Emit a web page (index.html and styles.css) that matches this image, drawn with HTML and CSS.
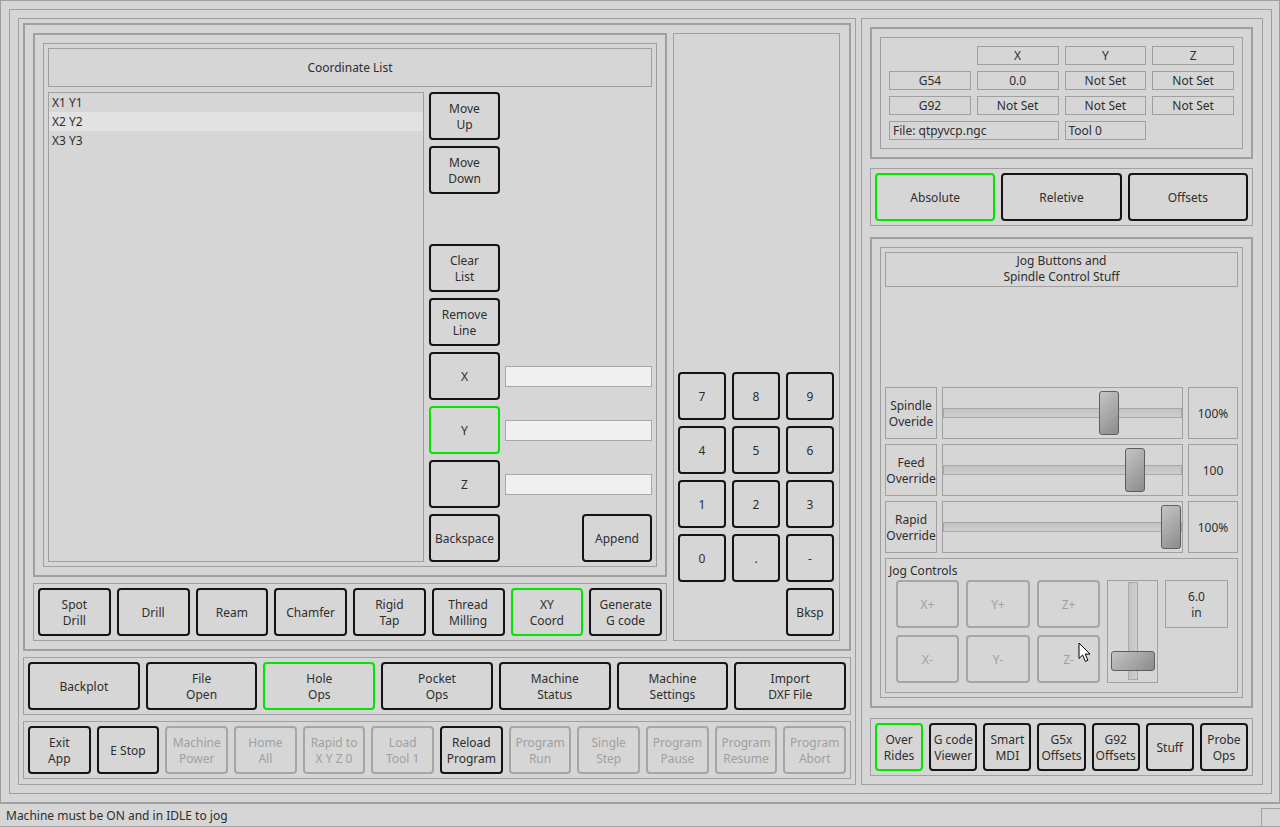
FILE: index.html
```html
<!DOCTYPE html>
<html lang="en">
  <head>
    <meta charset="UTF-8" />
    <title>Hole Ops</title>
    <link rel="stylesheet" href="styles.css">
  </head>
  <body>
    <div class="window">
      <div class="frame-outer">
        <!-- left side: hole ops work area + nav rows -->
        <div class="left-pane">
          <div class="work-area">
            <div class="work-left">
              <div class="coord-frame">
                <div class="coord-inner">
                  <div class="box coord-title">Coordinate List</div>
                  <div class="coord-body">
                    <ul class="coord-list">
                      <li>X1 Y1</li>
                      <li class="hover">X2 Y2</li>
                      <li>X3 Y3</li>
                    </ul>
                    <button class="btn c2 r1">Move<br>Up</button>
                    <button class="btn c2 r2">Move<br>Down</button>
                    <button class="btn c2 r4">Clear<br>List</button>
                    <button class="btn c2 r5">Remove<br>Line</button>
                    <button class="btn c2 r6">X</button>
                    <button class="btn on c2 r7">Y</button>
                    <button class="btn c2 r8">Z</button>
                    <button class="btn c2 r9">Backspace</button>
                    <input class="coord-input r6" type="text">
                    <input class="coord-input r7" type="text">
                    <input class="coord-input r8" type="text">
                    <button class="btn append r9">Append</button>
                  </div>
                </div>
              </div>
              <div class="row-frame">
                <button class="btn">Spot<br>Drill</button>
                <button class="btn">Drill</button>
                <button class="btn">Ream</button>
                <button class="btn">Chamfer</button>
                <button class="btn">Rigid<br>Tap</button>
                <button class="btn">Thread<br>Milling</button>
                <button class="btn on">XY<br>Coord</button>
                <button class="btn">Generate<br>G code</button>
              </div>
            </div>
            <div class="numpad">
              <button class="btn">7</button>
              <button class="btn">8</button>
              <button class="btn">9</button>
              <button class="btn">4</button>
              <button class="btn">5</button>
              <button class="btn">6</button>
              <button class="btn">1</button>
              <button class="btn">2</button>
              <button class="btn">3</button>
              <button class="btn">0</button>
              <button class="btn">.</button>
              <button class="btn">-</button>
              <button class="btn bksp">Bksp</button>
            </div>
          </div>
          <div class="row-frame">
            <button class="btn">Backplot</button>
            <button class="btn">File<br>Open</button>
            <button class="btn on">Hole<br>Ops</button>
            <button class="btn">Pocket<br>Ops</button>
            <button class="btn">Machine<br>Status</button>
            <button class="btn">Machine<br>Settings</button>
            <button class="btn">Import<br>DXF File</button>
          </div>
          <div class="row-frame">
            <button class="btn">Exit<br>App</button>
            <button class="btn">E Stop</button>
            <button class="btn off">Machine<br>Power</button>
            <button class="btn off">Home<br>All</button>
            <button class="btn off">Rapid to<br>X Y Z 0</button>
            <button class="btn off">Load<br>Tool 1</button>
            <button class="btn">Reload<br>Program</button>
            <button class="btn off">Program<br>Run</button>
            <button class="btn off">Single<br>Step</button>
            <button class="btn off">Program<br>Pause</button>
            <button class="btn off">Program<br>Resume</button>
            <button class="btn off">Program<br>Abort</button>
          </div>
        </div>

        <!-- right side: DRO, overrides, jog -->
        <div class="right-pane">
          <div class="dro-frame">
            <div class="dro-grid">
              <div></div>
              <div class="box lbl">X</div>
              <div class="box lbl">Y</div>
              <div class="box lbl">Z</div>
              <div class="box lbl">G54</div>
              <div class="box lbl">0.0</div>
              <div class="box lbl">Not Set</div>
              <div class="box lbl">Not Set</div>
              <div class="box lbl">G92</div>
              <div class="box lbl">Not Set</div>
              <div class="box lbl">Not Set</div>
              <div class="box lbl">Not Set</div>
              <div class="box lbl left span2">File: qtpyvcp.ngc</div>
              <div class="box lbl left">Tool 0</div>
            </div>
          </div>
          <div class="row-frame mode-frame">
            <button class="btn on">Absolute</button>
            <button class="btn">Reletive</button>
            <button class="btn">Offsets</button>
          </div>
          <div class="jog-frame">
            <div class="jog-inner">
              <div class="box jog-title">Jog Buttons and<br>Spindle Control Stuff</div>
              <div class="spacer"></div>
              <div class="override">
                <div class="box ov-label">Spindle<br>Overide</div>
                <div class="box hslider">
                  <div class="groove"></div>
                  <div class="handle" style="left: 156px"></div>
                </div>
                <div class="box ov-value">100%</div>
              </div>
              <div class="override">
                <div class="box ov-label">Feed<br>Override</div>
                <div class="box hslider">
                  <div class="groove"></div>
                  <div class="handle" style="left: 182px"></div>
                </div>
                <div class="box ov-value">100</div>
              </div>
              <div class="override">
                <div class="box ov-label">Rapid<br>Override</div>
                <div class="box hslider">
                  <div class="groove"></div>
                  <div class="handle" style="left: 218px"></div>
                </div>
                <div class="box ov-value">100%</div>
              </div>
              <div class="box jog-group">
                <div class="group-title">Jog Controls</div>
                <div class="jog-grid">
                  <button class="btn off">X+</button>
                  <button class="btn off">Y+</button>
                  <button class="btn off">Z+</button>
                  <div class="box vslider">
                    <div class="vgroove"></div>
                    <div class="vhandle" style="top: 70px"></div>
                  </div>
                  <div class="box step">6.0<br>in</div>
                  <button class="btn off">X-</button>
                  <button class="btn off">Y-</button>
                  <button class="btn off">Z-</button>
                </div>
              </div>
            </div>
          </div>
          <div class="row-frame tabs-frame">
            <button class="btn on">Over<br>Rides</button>
            <button class="btn">G code<br>Viewer</button>
            <button class="btn">Smart<br>MDI</button>
            <button class="btn">G5x<br>Offsets</button>
            <button class="btn">G92<br>Offsets</button>
            <button class="btn">Stuff</button>
            <button class="btn">Probe<br>Ops</button>
          </div>
        </div>
      </div>
    </div>
    <div class="statusbar">
      <span>Machine must be ON and in IDLE to jog</span>
      <div class="grip"></div>
    </div>

    <svg class="cursor" width="14" height="21" viewBox="0 0 14 21">
      <path d="M1 1 L1 16.5 L4.6 13 L7.4 19.4 L9.9 18.3 L7.2 12.1 L12 12.1 Z" fill="#fff" stroke="#000" stroke-width="1" stroke-linejoin="round"/>
    </svg>
  </body>
</html>
```

FILE: styles.css
```css
* {
  box-sizing: border-box;
}
body {
  margin: 0;
  width: 1280px;
  height: 827px;
  overflow: hidden;
  position: relative;
  background-color: #d6d6d6;
  font-family: "Noto Sans", "DejaVu Sans", sans-serif;
  font-size: 12px;
  line-height: 16px;
  color: #2e2e2e;
}
.box {
  border: 1px solid #a0a0a0;
}

/* outer frames */
.window {
  height: 803px;
  border: 1px solid #a0a0a0;
  padding: 8px 7px 8px 8px;
}
.frame-outer {
  height: 785px;
  border: 1px solid #a0a0a0;
  padding: 8px;
  display: flex;
  gap: 5px;
}
.left-pane {
  width: 838px;
  border: 1px solid #a0a0a0;
  padding: 4px 4px 5px;
  display: flex;
  flex-direction: column;
  gap: 6px;
}
.right-pane {
  width: 402px;
  border: 1px solid #a0a0a0;
  padding: 8px 9px 8px 8px;
  display: flex;
  flex-direction: column;
}

/* buttons */
.btn {
  font: inherit;
  color: inherit;
  background: transparent;
  border: 2px solid #141414;
  border-radius: 4px;
  padding: 1px 0 0;
  min-width: 0;
  text-align: center;
}
.btn.on {
  border-color: #00e600;
}
.btn.off {
  border-color: #a6a6a6;
  color: #a0a0a0;
}
.row-frame {
  height: 58px;
  flex: none;
  border: 1px solid #a0a0a0;
  padding: 4px;
  display: flex;
  gap: 6px;
}
.row-frame .btn {
  flex: 1;
}

/* hole ops work area */
.work-area {
  height: 628px;
  flex: none;
  border: 2px solid #a0a0a0;
  padding: 8px 9px 8px 8px;
  display: flex;
  gap: 6px;
}
.work-left {
  width: 634px;
  display: flex;
  flex-direction: column;
  gap: 6px;
}
.coord-frame {
  height: 544px;
  border: 2px solid #a0a0a0;
  padding: 8px;
}
.coord-inner {
  height: 100%;
  border: 1px solid #a0a0a0;
  padding: 4px;
  display: flex;
  flex-direction: column;
  gap: 5px;
}
.coord-title {
  height: 39px;
  display: flex;
  align-items: center;
  justify-content: center;
}
.coord-body {
  flex: 1;
  display: grid;
  grid-template-columns: 376px 71px minmax(0, 1fr);
  grid-template-rows: 48px 48px 1fr repeat(6, 48px);
  gap: 6px 5px;
}
.coord-list {
  grid-column: 1;
  grid-row: 1 / -1;
  margin: 0;
  padding: 0;
  list-style: none;
  border: 1px solid #a0a0a0;
}
.coord-list li {
  height: 19px;
  line-height: 19px;
  padding-left: 3px;
}
.coord-list li.hover {
  background-color: #e2e2e2;
}
.c2 { grid-column: 2; }
.r1 { grid-row: 1; }
.r2 { grid-row: 2; }
.r4 { grid-row: 4; }
.r5 { grid-row: 5; }
.r6 { grid-row: 6; }
.r7 { grid-row: 7; }
.r8 { grid-row: 8; }
.r9 { grid-row: 9; }
.coord-input {
  grid-column: 3;
  align-self: center;
  width: 100%;
  min-width: 0;
  height: 21px;
  margin: 0;
  padding: 0 3px;
  border: 1px solid #a8a8a8;
  background-color: #f0f0f0;
  font: inherit;
}
.append {
  grid-column: 3;
  justify-self: end;
  width: 70px;
}
.numpad {
  width: 167px;
  border: 1px solid #a0a0a0;
  padding: 4px;
  display: grid;
  grid-template-columns: repeat(3, 48px);
  grid-auto-rows: 48px;
  gap: 6px;
  align-content: end;
}
.numpad .bksp {
  grid-column: 3;
}

/* DRO */
.dro-frame {
  height: 132px;
  flex: none;
  border: 2px solid #a0a0a0;
  padding: 8px;
}
.dro-grid {
  height: 100%;
  border: 1px solid #a0a0a0;
  padding: 8px;
  display: grid;
  grid-template-columns: repeat(4, 1fr);
  grid-auto-rows: 19px;
  gap: 6px;
}
.lbl {
  text-align: center;
  line-height: 17px;
}
.lbl.left {
  text-align: left;
  padding-left: 3px;
}
.span2 {
  grid-column: span 2;
}
.mode-frame {
  margin-top: 9px;
}
.tabs-frame {
  margin-top: 10px;
}

/* jog / overrides */
.jog-frame {
  height: 471px;
  flex: none;
  margin-top: 11px;
  border: 2px solid #a0a0a0;
  padding: 8px;
}
.jog-inner {
  height: 100%;
  border: 1px solid #a0a0a0;
  padding: 4px;
  display: flex;
  flex-direction: column;
  gap: 5px;
}
.jog-title {
  height: 35px;
  padding-bottom: 1px;
  display: flex;
  align-items: center;
  justify-content: center;
  text-align: center;
}
.spacer {
  flex: 1;
}
.override {
  height: 52px;
  display: grid;
  grid-template-columns: 52px 1fr 50px;
  gap: 5px;
}
.ov-label,
.ov-value {
  padding-top: 1px;
  display: flex;
  align-items: center;
  justify-content: center;
  text-align: center;
}
.hslider {
  position: relative;
  display: flex;
  align-items: center;
}
.groove {
  width: 100%;
  height: 10px;
  border: 1px solid #a8a8a8;
  background: linear-gradient(#c2c2c2, #cecece);
}
.handle {
  position: absolute;
  top: 3px;
  width: 20px;
  height: 44px;
  border: 1px solid #5e5e5e;
  border-radius: 3px;
  background: linear-gradient(135deg, #c4c4c4, #8c8c8c);
}
.jog-group {
  height: 135px;
  padding: 4px 3px;
}
.group-title {
  height: 17px;
}
.jog-grid {
  margin-left: 7px;
  display: grid;
  grid-template-columns: 63px 64px 63px 51px 63px;
  grid-template-rows: 48px 48px;
  gap: 7px;
}
.vslider {
  grid-column: 4;
  grid-row: 1 / 3;
  position: relative;
  display: flex;
  justify-content: center;
  padding: 1px 0 2px;
}
.vgroove {
  width: 10px;
  border: 1px solid #a8a8a8;
  background: linear-gradient(90deg, #c2c2c2, #cecece);
}
.vhandle {
  position: absolute;
  left: 3px;
  width: 44px;
  height: 20px;
  border: 1px solid #5e5e5e;
  border-radius: 3px;
  background: linear-gradient(135deg, #c4c4c4, #8c8c8c);
}
.step {
  grid-column: 5;
  grid-row: 1;
  padding-top: 1px;
  display: flex;
  align-items: center;
  justify-content: center;
  text-align: center;
}

/* status bar */
.statusbar {
  height: 24px;
  border-bottom: 1px solid #a0a0a0;
  border-top: 1px solid #a0a0a0;
  padding: 1px 0 0 6px;
  display: flex;
  align-items: center;
  justify-content: space-between;
}
.grip {
  align-self: flex-end;
  width: 19px;
  height: 18px;
  border-left: 1px solid #a0a0a0;
  border-top: 1px solid #a0a0a0;
}
.cursor {
  position: absolute;
  left: 1078px;
  top: 642px;
}
```
